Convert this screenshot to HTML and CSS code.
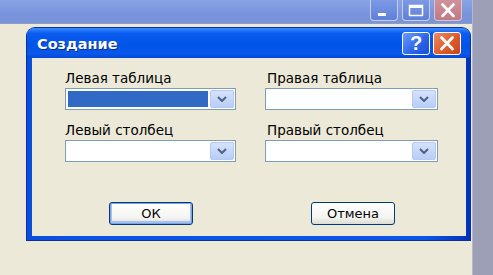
FILE: index.html
```html
<!DOCTYPE html>
<html lang="ru">
<head>
<meta charset="utf-8">
<title>Создание</title>
<link rel="stylesheet" href="styles.css">
</head>
<body>
<div class="screen">
  <div class="main">
    <div class="appbar">
      <span class="abtn">
        <svg width="28" height="21" viewBox="0 0 28 21"><rect x="8" y="13" width="8" height="3" fill="#fff"/></svg>
      </span>
      <span class="abtn">
        <svg width="28" height="21" viewBox="0 0 28 21"><rect x="7.5" y="5.5" width="13" height="10" fill="none" stroke="#fff" stroke-width="1.5"/><rect x="7" y="5" width="14" height="3" fill="#fff"/></svg>
      </span>
      <span class="abtn close">
        <svg width="28" height="21" viewBox="0 0 28 21"><path d="M8.5 4.5 L19.5 16 M19.5 4.5 L8.5 16" stroke="#fff" stroke-width="2.6" stroke-linecap="round"/></svg>
      </span>
    </div>
    <div class="desk">
      <div class="dialog">
        <div class="titlebar">
          <span class="title">Создание</span>
          <span class="tbtn help">?</span>
          <span class="tbtn close">
            <svg width="28" height="23" viewBox="0 0 28 23"><path d="M8.5 5.5 L19.5 17 M19.5 5.5 L8.5 17" stroke="#fff" stroke-width="2.8" stroke-linecap="round"/></svg>
          </span>
        </div>
        <div class="client">
          <div class="fields">
            <div class="group">
              <label class="lbl">Левая таблица</label>
              <div class="combo"><span class="value selected"></span><span class="drop"><svg width="10" height="6" viewBox="0 0 10 6"><path d="M1 1 L5 5 L9 1" fill="none" stroke="#4d6185" stroke-width="2"/></svg></span></div>
            </div>
            <div class="group">
              <label class="lbl right">Правая таблица</label>
              <div class="combo"><span class="value"></span><span class="drop"><svg width="10" height="6" viewBox="0 0 10 6"><path d="M1 1 L5 5 L9 1" fill="none" stroke="#4d6185" stroke-width="2"/></svg></span></div>
            </div>
            <div class="group">
              <label class="lbl">Левый столбец</label>
              <div class="combo"><span class="value"></span><span class="drop"><svg width="10" height="6" viewBox="0 0 10 6"><path d="M1 1 L5 5 L9 1" fill="none" stroke="#4d6185" stroke-width="2"/></svg></span></div>
            </div>
            <div class="group">
              <label class="lbl right">Правый столбец</label>
              <div class="combo"><span class="value"></span><span class="drop"><svg width="10" height="6" viewBox="0 0 10 6"><path d="M1 1 L5 5 L9 1" fill="none" stroke="#4d6185" stroke-width="2"/></svg></span></div>
            </div>
          </div>
          <div class="actions">
            <button class="btn default">ОК</button>
            <button class="btn">Отмена</button>
          </div>
        </div>
      </div>
    </div>
  </div>
  <div class="side"></div>
</div>
</body>
</html>
```
FILE: styles.css
```css
html, body {
  margin: 0;
  padding: 0;
  background: #ece9d8;
}
.screen {
  width: 493px;
  height: 275px;
  display: flex;
  overflow: hidden;
  font-family: "DejaVu Sans", "Liberation Sans", sans-serif;
}
.main {
  width: 472px;
  display: flex;
  flex-direction: column;
}
.side {
  flex: 1;
  background: #9c9fb6;
  border-left: 1px solid #b4b8cc;
}
.appbar {
  height: 24px;
  box-sizing: border-box;
  background: linear-gradient(#8aa5e6, #7893dc 60%, #7a94d9);
  border-bottom: 1px solid #8c9cc4;
  display: flex;
  justify-content: flex-end;
  align-items: flex-start;
  padding: 0 10px 0 0;
  gap: 4px;
}
.abtn {
  width: 28px;
  height: 21px;
  box-sizing: border-box;
  border: 1px solid #c3d0f2;
  border-top: none;
  border-radius: 0 0 4px 4px;
  background: linear-gradient(#7d9ae6, #5f80d8);
  display: block;
  position: relative;
}
.abtn svg { position: absolute; left: -1px; top: 0; }
.abtn.close {
  background: linear-gradient(#d0929a, #bf7a84);
  border-color: #d8c3cf;
}
.desk {
  flex: 1;
  padding: 4px 0 0 27px;
  background: #ece9d8;
}
.dialog {
  width: 443px;
  height: 212px;
  box-sizing: border-box;
  background: linear-gradient(90deg, #0a4ed8, #0a52e6 10%, #0b56ea 90%, #0331b8);
  border-radius: 8px 8px 0 0;
  padding: 0 4px 4px 5px;
  display: flex;
  flex-direction: column;
  box-shadow: 0 0 0 1px #0a2fa0;
}
.titlebar {
  height: 30px;
  display: flex;
  align-items: center;
  margin: 0 -4px 0 -5px;
  padding: 0 9px 0 10px;
  border-radius: 8px 8px 0 0;
  background: linear-gradient(#3b8cff, #0a5cf0 18%, #0054e8 60%, #0a58ea 85%, #0647d6);
}
.title {
  flex: 1;
  color: #fff;
  font-weight: bold;
  font-size: 14.5px;
  text-shadow: 1px 1px 0 #0a2a8a;
  padding-top: 2px;
}
.tbtn {
  width: 28px;
  height: 23px;
  box-sizing: border-box;
  border: 1px solid #fff;
  border-radius: 3px;
  margin-left: 3px;
  display: flex;
  align-items: center;
  justify-content: center;
  color: #fff;
  font-family: "Liberation Sans", sans-serif;
  font-weight: bold;
  font-size: 20px;
  position: relative;
}
.tbtn.help {
  background: linear-gradient(135deg, #6d9bff, #2a63e8 60%, #1b4fd6);
}
.tbtn.close {
  background: linear-gradient(135deg, #f08a64, #e05a2a 55%, #c84418);
}
.tbtn svg { position: absolute; left: -1px; top: -1px; }
.client {
  flex: 1;
  background: #ece9d8;
  padding: 12px 0 0 33px;
}
.fields {
  display: grid;
  grid-template-columns: 171px 173px;
  column-gap: 29px;
  row-gap: 12px;
}
.lbl {
  display: block;
  font-size: 13.5px;
  line-height: 16px;
  margin-bottom: 2px;
  color: #000;
}
.lbl.right { padding-left: 2px; }
.combo {
  height: 22px;
  box-sizing: border-box;
  border: 1px solid #7f9db9;
  background: #fff;
  display: flex;
  padding: 1px;
  gap: 2px;
}
.value { flex: 1; }
.value.selected { background: #316ac5; margin: 1px 0 1px 1px; }
.drop {
  width: 24px;
  background: linear-gradient(#d6e2fc, #b9cdf7);
  border: 1px solid #b5c9f3;
  box-sizing: border-box;
  border-radius: 2px;
  display: flex;
  align-items: center;
  justify-content: center;
}
.actions {
  display: flex;
  margin-top: 40px;
  padding-left: 44px;
  gap: 118px;
}
.btn {
  width: 84px;
  height: 23px;
  box-sizing: border-box;
  border: 1px solid #003c74;
  border-radius: 3px;
  background: linear-gradient(#ffffff, #f4f4f0 70%, #dcdcd4);
  font-family: "DejaVu Sans", "Liberation Sans", sans-serif;
  font-size: 13px;
  color: #000;
  padding: 0;
}
.btn.default {
  box-shadow: inset 0 0 0 1px #7ca2e8, inset 0 -1px 0 2px #a6c0f0;
}
```
